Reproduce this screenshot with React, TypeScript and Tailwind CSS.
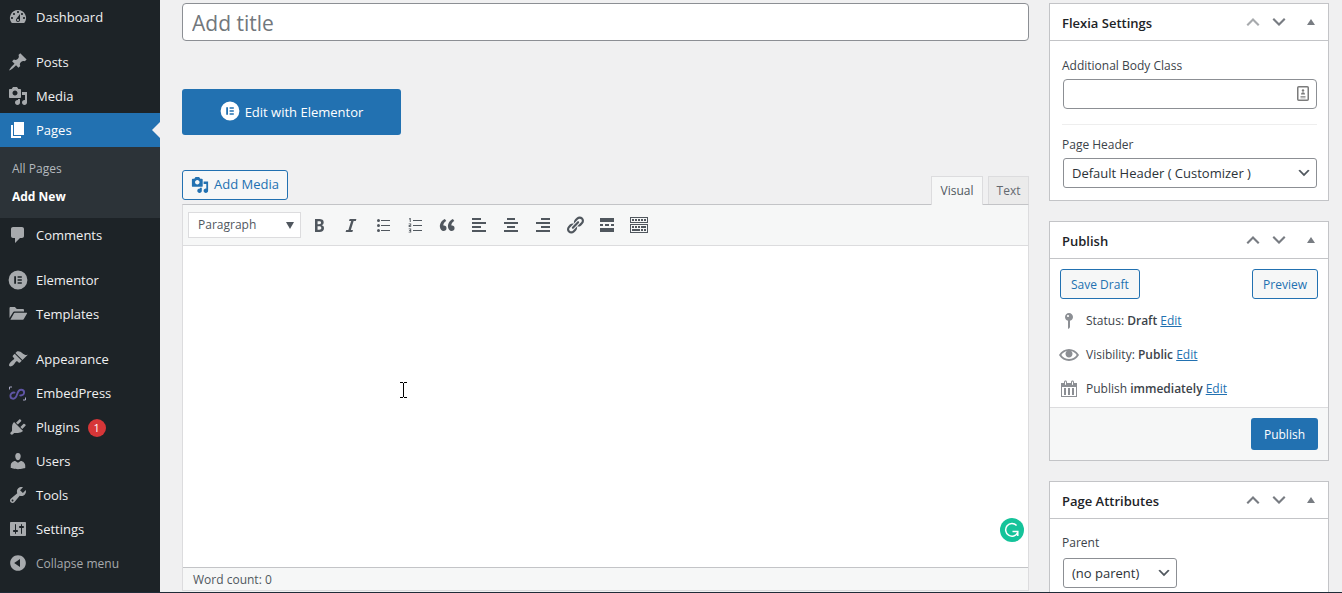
import React from "react";

const paths = {
  dashboard:
    "M3.76 16h12.48A7.998 7.998 0 0 0 10 3a7.998 7.998 0 0 0-6.24 13zM10 4c.55 0 1 .45 1 1s-.45 1-1 1-1-.45-1-1 .45-1 1-1zM6 6c.55 0 1 .45 1 1s-.45 1-1 1-1-.45-1-1 .45-1 1-1zm8 0c.55 0 1 .45 1 1s-.45 1-1 1-1-.45-1-1 .45-1 1-1zm-5.37 5.55L12 7v6c0 1.1-.9 2-2 2s-2-.9-2-2c0-.57.24-1.08.63-1.45zM4 10c.55 0 1 .45 1 1s-.45 1-1 1-1-.45-1-1 .45-1 1-1zm12 0c.55 0 1 .45 1 1s-.45 1-1 1-1-.45-1-1 .45-1 1-1zm-5 3c0-.55-.45-1-1-1s-1 .45-1 1 .45 1 1 1 1-.45 1-1z",
  post: "M10.44 3.02l1.82-1.82 6.36 6.35-1.83 1.82c-1.05-.68-2.48-.57-3.41.36l-.75.75c-.92.93-1.04 2.35-.35 3.41l-1.83 1.82-2.41-2.41-2.8 2.79c-.42.42-3.38 2.71-3.8 2.29s1.86-3.39 2.28-3.81l2.79-2.79L4.1 9.36l1.83-1.82c1.05.69 2.48.57 3.4-.36l.75-.75c.93-.92 1.05-2.35.36-3.41z",
  media:
    "M13 11V4c0-.55-.45-1-1-1h-1.67L9 1H5L3.67 3H2c-.55 0-1 .45-1 1v7c0 .55.45 1 1 1h10c.55 0 1-.45 1-1zM7 4.5c1.38 0 2.5 1.12 2.5 2.5S8.38 9.5 7 9.5 4.5 8.38 4.5 7 5.62 4.5 7 4.5zM14 6h5v10.5c0 1.38-1.12 2.5-2.5 2.5S14 17.88 14 16.5s1.12-2.5 2.5-2.5c.17 0 .34.02.5.05V9h-3V6zm-4 8.05V13h2v3.5c0 1.38-1.12 2.5-2.5 2.5S7 17.88 7 16.5 8.12 14 9.5 14c.17 0 .34.02.5.05z",
  page: "M6 15V2h10v13H6zm-1 1h8v2H3V5h2v11z",
  comments:
    "M5 2h9c1.1 0 2 .9 2 2v7c0 1.1-.9 2-2 2h-2l-5 5v-5H5c-1.1 0-2-.9-2-2V4c0-1.1.9-2 2-2z",
  elementor:
    "M10 .6a9.4 9.4 0 1 0 0 18.800A9.4 9.4 0 0 0 10 .6zM6.2 6.2H8v7.6H6.2zM9.6 6.2h4.2v1.5H9.6zM9.6 9.2h4.2v1.5H9.6zM9.6 12.3h4.2v1.5H9.6z",
  templates:
    "M1.5 14V4.2c0-.7.5-1.2 1.2-1.2h4.2l1.9 2h6c.7 0 1.2.5 1.2 1.2v1.3H6.3c-.5 0-1 .3-1.200.7zM2.400 15.700L6 9.300c.2-.4.5-.6.9-.6h11.600c.500 0 .8.5.5.9l-3.200 5.500c-.2.4-.5.600-.9.600z",
  appearance:
    "M14.48 11.06L7.41 3.99l1.5-1.5c.5-.56 2.3-.47 3.51.32 1.21.8 1.43 1.28 2.91 2.1 1.18.64 2.45 1.26 4.45.85zm-.71.71L6.7 4.7 4.93 6.47c-.39.39-.39 1.02 0 1.41l1.06 1.06c.39.39.39 1.03 0 1.42-.6.6-1.43 1.11-2.21 1.69-.35.26-.7.53-1.01.84C1.43 14.23.4 16.08 1.4 17.07c.99 1 2.84-.03 4.18-1.36.31-.31.58-.66.85-1.02.57-.78 1.08-1.61 1.69-2.21.39-.39 1.02-.39 1.41 0l1.06 1.06c.39.39 1.02.39 1.41 0z",
  plugins:
    "M13.11 4.36L9.87 7.6 8 5.73l3.24-3.24c.35-.34 1.05-.2 1.56.32.52.51.66 1.21.31 1.55zm-8 1.77l.91-1.12 9.01 9.01-1.19.84c-.71.71-2.63 1.16-3.82 1.16H6.14L4.9 17.26c-.59.59-1.54.59-2.12 0-.59-.58-.59-1.53 0-2.12l1.24-1.24v-3.88c0-1.13.4-3.19 1.09-3.89zm7.26 3.97l3.24-3.24c.34-.35 1.04-.21 1.55.31.52.51.66 1.21.31 1.55l-3.24 3.25z",
  users:
    "M10 9.25c-2.27 0-2.73-3.44-2.73-3.44C7 4.02 7.82 2 9.97 2c2.16 0 2.98 2.02 2.71 3.81 0 0-.41 3.44-2.68 3.44zm0 2.57L12.72 10c2.39 0 4.52 2.33 4.52 4.53v2.49s-3.65 1.13-7.24 1.13c-3.65 0-7.24-1.13-7.24-1.13v-2.49c0-2.25 1.94-4.48 4.47-4.48z",
  tools:
    "M16.68 9.77c-1.34 1.34-3.3 1.67-4.95.99l-5.41 6.52c-.99.99-2.59.99-3.58 0s-.99-2.59 0-3.57l6.52-5.42c-.68-1.65-.35-3.61.99-4.95 1.28-1.28 3.12-1.62 4.72-1.06l-2.89 2.89 2.82 2.82 2.86-2.87c.53 1.58.18 3.39-1.08 4.65zM3.81 16.21c.4.39 1.04.39 1.43 0 .4-.4.4-1.04 0-1.43-.39-.4-1.03-.4-1.43 0-.39.39-.39 1.03 0 1.43z",
  settings:
    "M18 16V4c0-.55-.45-1-1-1H3c-.55 0-1 .45-1 1v12c0 .55.45 1 1 1h14c.55 0 1-.45 1-1zM8 11h1c.55 0 1 .45 1 1s-.45 1-1 1H8v1.5c0 .28-.22.5-.5.5s-.5-.22-.5-.5V13H6c-.55 0-1-.45-1-1s.45-1 1-1h1V5.5c0-.28.22-.5.5-.5s.5.22.5.5V11zm5-2h-1c-.55 0-1-.45-1-1s.45-1 1-1h1V5.5c0-.28.22-.5.5-.5s.5.22.5.5V7h1c.55 0 1 .45 1 1s-.45 1-1 1h-1v5.5c0 .28-.22.5-.5.5s-.5-.22-.5-.5V9z",
  collapse:
    "M10 2.16c4.33 0 7.84 3.51 7.84 7.84s-3.51 7.84-7.84 7.84S2.16 14.33 2.16 10 5.71 2.16 10 2.16zm2 11.72V6.12L6.18 9.97z",
  bold: "M6 4v13h4.54c1.37 0 2.46-.33 3.26-1 .8-.66 1.2-1.58 1.2-2.77 0-.84-.17-1.51-.51-2.01s-.9-.85-1.67-1.03v-.09c.57-.1 1.02-.4 1.36-.9s.51-1.13.51-1.91c0-1.14-.39-1.98-1.17-2.5C12.75 4.26 11.5 4 9.78 4H6zm2.57 5.15V6.26h1.36c.73 0 1.27.11 1.61.32.34.22.51.58.51 1.07 0 .54-.16.92-.47 1.15s-.82.35-1.51.35h-1.5zm0 2.19h1.6c1.44 0 2.16.53 2.16 1.61 0 .6-.17 1.05-.51 1.34s-.86.43-1.57.43H8.57v-3.38z",
  italic: "M14.78 6h-2.13l-2.8 9h2.12l-.62 2H4.6l.62-2h2.14l2.8-9H8.03l.62-2h6.75z",
  bullets:
    "M5.500 7a1.500 1.500 0 1 1 0-3 1.500 1.500 0 0 1 0 3zM8 5h9v1H8zM5.500 12a1.500 1.500 0 1 1 0-3 1.500 1.500 0 0 1 0 3zM8 10h9v1H8zM5.500 17a1.500 1.500 0 1 1 0-3 1.500 1.500 0 0 1 0 3zM8 15h9v1H8z",
  numbers:
    "M8 5h9v1H8zM8 10h9v1H8zM8 15h9v1H8zM4.800 3h.9v4h-.9V4.200l-.8.4v-.9zM3.700 8.500h2.500v2.200H4.600v.6h1.600v.8H3.700v-2.200h1.600v-.6H3.700zM3.700 13.500h2.500v4H3.700v-.8h1.600v-.8H4.200v-.8h1.100v-.8H3.700z",
  quote:
    "M9.49 13.22c0-.74-.2-1.38-.61-1.9-.62-.78-1.83-.88-2.53-.72-.29-1.65 1.11-3.75 2.92-4.65L7.88 4c-2.73 1.3-5.42 4.28-4.96 8.05C3.21 14.43 4.59 16 6.54 16c.85 0 1.56-.25 2.12-.75s.83-1.18.83-2.03zm8.05 0c0-.74-.2-1.38-.61-1.9-.63-.78-1.83-.88-2.53-.72-.29-1.65 1.11-3.75 2.92-4.65L15.93 4c-2.73 1.3-5.41 4.28-4.95 8.05.29 2.38 1.66 3.95 3.61 3.95.85 0 1.56-.25 2.12-.75s.83-1.18.83-2.03z",
  left: "M12 5V3H3v2h9zm5 4V7H3v2h14zm-5 4v-2H3v2h9zm5 4v-2H3v2h14z",
  center: "M14 5V3H6v2h8zm3 4V7H3v2h14zm-3 4v-2H6v2h8zm3 4v-2H3v2h14z",
  right: "M17 5V3H8v2h9zm0 4V7H3v2h14zm0 4v-2H8v2h9zm0 4v-2H3v2h14z",
  link: "M17.74 2.76c1.68 1.69 1.68 4.41 0 6.1l-1.53 1.52c-1.12 1.12-2.7 1.47-4.14 1.09l2.62-2.61.76-.77.76-.76c.84-.84.84-2.2 0-3.04-.84-.85-2.2-.85-3.04 0l-.77.76-3.38 3.38c-.37-1.44-.02-3.02 1.1-4.14l1.52-1.53c1.69-1.68 4.42-1.68 6.1 0zM8.59 13.43l5.34-5.34c.42-.42.42-1.1 0-1.52-.44-.43-1.13-.39-1.53 0l-5.33 5.34c-.42.42-.42 1.1 0 1.52.44.43 1.13.39 1.52 0zm-.76 2.29l4.14-4.15c.38 1.44.03 3.02-1.09 4.14l-1.52 1.53c-1.69 1.68-4.41 1.68-6.1 0-1.68-1.68-1.68-4.42 0-6.1l1.53-1.52c1.12-1.12 2.7-1.47 4.14-1.1l-4.14 4.15c-.85.84-.85 2.2 0 3.05.84.84 2.2.84 3.04 0z",
  more: "M17 7V3H3v4h14zM6 11V9H3v2h3zm6 0V9H8v2h4zm5 0V9h-3v2h3zm0 6v-4H3v4h14z",
  toggle:
    "M19 2v6H1V2h18zm-1 5V3H2v4h16zM5 4v2H3V4h2zm3 0v2H6V4h2zm3 0v2H9V4h2zm3 0v2h-2V4h2zm3 0v2h-2V4h2zm2 5v9H1V9h18zm-1 8v-7H2v7h16zM5 11v2H3v-2h2zm3 0v2H6v-2h2zm3 0v2H9v-2h2zm6 0v2h-5v-2h5zm-6 3v2H3v-2h8zm3 0v2h-2v-2h2zm3 0v2h-2v-2h2z",
  status:
    "M14 6c0 1.86-1.28 3.41-3 3.86V16c0 1-2 2-2 2V9.86c-1.72-.45-3-2-3-3.86 0-2.21 1.79-4 4-4s4 1.79 4 4zM8 5c0 .55.45 1 1 1s1-.45 1-1-.45-1-1-1-1 .45-1 1z",
  visibility:
    "M19.7 9.4C17.7 6 14 3.9 10 3.9S2.3 6 .3 9.4L0 10l.3.6c2 3.4 5.7 5.5 9.7 5.5s7.7-2.1 9.7-5.5l.3-.6-.3-.6zM10 14.1c-3.1 0-6-1.6-7.7-4.1C3.6 8 5.7 6.6 8 6.1c-.9.6-1.5 1.7-1.5 2.9 0 1.9 1.6 3.5 3.5 3.5s3.5-1.6 3.5-3.5c0-1.2-.6-2.3-1.5-2.9 2.3.5 4.4 1.9 5.7 3.9-1.7 2.5-4.6 4.1-7.7 4.1z",
  calendar:
    "M15 4h3v14H2V4h3V3c0-.83.67-1.5 1.5-1.5S8 2.17 8 3v1h4V3c0-.83.67-1.5 1.5-1.5S15 2.17 15 3v1zM6 3v2.5c0 .28.22.5.5.5s.5-.22.5-.5V3c0-.28-.22-.5-.5-.5S6 2.72 6 3zm7 0v2.5c0 .28.22.5.5.5s.5-.22.5-.5V3c0-.28-.22-.5-.5-.5s-.5.22-.5.5zm4 14V8H3v9h14zM7 16V9H5v7h2zm4 0V9H9v7h2zm4 0V9h-2v7h2z",
  up: "M3.500 12.400l1.500 1.600 5-4.900 5 4.900 1.500-1.600L10 6z",
  down: "M3.500 7.600L5 6l5 4.900L15 6l1.500 1.600L10 14z",
  triangleUp: "M6 13l4-6 4 6z",
  selectArrow: "M5 6l5 5 5-5 2 1-7 7-7-7 2-1z",
};

type IconName = keyof typeof paths;

function Icon({ name, className = "size-5" }: { name: IconName; className?: string }) {
  return (
    <svg viewBox="0 0 20 20" fill="currentColor" fillRule="evenodd" aria-hidden="true" className={className}>
      <path d={paths[name]} />
    </svg>
  );
}

function EmbedPressIcon() {
  return (
    <svg viewBox="0 0 20 20" fill="none" aria-hidden="true" className="size-5">
      <path
        d="M6.500 9.600C4.500 9.200 2.400 10.700 2.400 12.800c0 1.700 1.300 2.900 2.800 2.900 2.300 0 3.200-2 3.900-4.400.7-2.500 1.700-4.600 4.100-4.600 1.600 0 2.900 1.200 2.900 2.800 0 2-1.900 3.300-3.900 2.900"
        stroke="#5f55a5"
        strokeWidth="1.900"
        strokeLinecap="round"
      />
      <path d="M1.500 6.500V4H4M17.500 14.500V17H15" stroke="#a9a8c4" strokeWidth="1" />
    </svg>
  );
}

type Item = { label: string; icon?: IconName; badge?: string; active?: boolean; gap?: boolean };

const menu: Item[] = [
  { label: "Dashboard", icon: "dashboard" },
  { label: "Posts", icon: "post", gap: true },
  { label: "Media", icon: "media" },
  { label: "Pages", icon: "page", active: true },
  { label: "Comments", icon: "comments" },
  { label: "Elementor", icon: "elementor", gap: true },
  { label: "Templates", icon: "templates" },
  { label: "Appearance", icon: "appearance", gap: true },
  { label: "EmbedPress" },
  { label: "Plugins", icon: "plugins", badge: "1" },
  { label: "Users", icon: "users" },
  { label: "Tools", icon: "tools" },
  { label: "Settings", icon: "settings" },
];

function Sidebar() {
  return (
    <nav aria-label="Main menu" className="w-40 shrink-0 bg-[#1d2327] text-[13px] text-[#f0f0f1]">
      <ul>
        {menu.map((m) => (
          <li key={m.label} className={m.gap ? "pt-[11px]" : ""}>
            <a
              href="#"
              className={
                m.active
                  ? "relative flex h-[34px] items-center gap-2 bg-[#2271b1] pl-2 font-medium text-white"
                  : "flex h-[34px] items-center gap-2 pl-2 font-medium"
              }
            >
              <span className={m.active ? "text-white" : "text-[#a7aaad]"}>
                {m.icon ? <Icon name={m.icon} /> : <EmbedPressIcon />}
              </span>
              <span className="pt-[2px]">{m.label}</span>
              {m.badge && (
                <span className="mt-[2px] flex size-[18px] items-center justify-center rounded-full bg-[#d63638] text-[11px] text-white">
                  {m.badge}
                </span>
              )}
              {m.active && (
                <span className="absolute top-1/2 right-0 -translate-y-1/2 border-8 border-transparent border-r-[#f0f0f1]" />
              )}
            </a>
            {m.active && (
              <ul className="bg-[#2c3338] pt-2 pb-[7px] pl-3">
                <li>
                  <a href="#" className="flex h-7 items-center text-xs text-[#b4b9be]">
                    All Pages
                  </a>
                </li>
                <li>
                  <a href="#" className="flex h-7 items-center text-xs font-bold text-white">
                    Add New
                  </a>
                </li>
              </ul>
            )}
          </li>
        ))}
      </ul>
      <button type="button" className="flex h-[34px] w-full items-center gap-2 pl-2 text-xs text-[#a7aaad]">
        <Icon name="collapse" />
        <span className="pt-[2px]">Collapse menu</span>
      </button>
    </nav>
  );
}

const tools: { name: IconName; label: string }[] = [
  { name: "bold", label: "Bold" },
  { name: "italic", label: "Italic" },
  { name: "bullets", label: "Bulleted list" },
  { name: "numbers", label: "Numbered list" },
  { name: "quote", label: "Blockquote" },
  { name: "left", label: "Align left" },
  { name: "center", label: "Align center" },
  { name: "right", label: "Align right" },
  { name: "link", label: "Insert link" },
  { name: "more", label: "Insert Read More tag" },
  { name: "toggle", label: "Toolbar toggle" },
];

function Editor() {
  return (
    <section className="flex grow flex-col pt-[35px]">
      <div className="flex items-end justify-between">
        <button
          type="button"
          className="mb-1 flex h-[30px] items-center gap-[5px] rounded-[3px] border border-[#2271b1] bg-[#f6f7f7] px-2 text-[13px] text-[#2271b1]"
        >
          <Icon name="media" className="size-[18px]" />
          Add Media
        </button>
        <div className="flex items-end gap-[5px] text-xs text-[#50575e]">
          <button
            type="button"
            className="relative z-10 -mb-px h-[29px] w-[52px] border border-b-0 border-[#dcdcde] bg-[#f6f7f7]"
          >
            Visual
          </button>
          <button type="button" className="h-7 w-[41px] border border-b-0 border-[#dcdcde] bg-[#ebebeb] text-[#646970]">
            Text
          </button>
        </div>
      </div>
      <div className="flex grow flex-col border border-[#dcdcde] border-t-[#c3c4c7] bg-white">
        <div className="flex h-[41px] items-center border-b border-[#dcdcde] bg-[#f6f7f7] pl-[5px] text-[#50575e]">
          <div className="relative mr-1">
            <select
              aria-label="Text format"
              className="block h-[26px] w-[113px] appearance-none border border-[#dcdcde] bg-white pl-[9px] text-xs text-[#50575e]"
            >
              <option>Paragraph</option>
              <option>Heading 1</option>
              <option>Heading 2</option>
            </select>
            <svg viewBox="0 0 10 8" aria-hidden="true" className="pointer-events-none absolute top-[9px] right-[6px] h-2 w-[10px]">
              <path d="M1 1h8L5 8z" fill="#50575e" />
            </svg>
          </div>
          <div className="flex gap-1">
            {tools.map((t) => (
              <button key={t.name} type="button" aria-label={t.label} className="flex h-7 w-7 items-center justify-center">
                <Icon name={t.name} />
              </button>
            ))}
          </div>
        </div>
        <div className="relative flex grow">
          <textarea aria-label="Page content" className="block w-full grow resize-none outline-none" />
          <svg viewBox="0 0 9 16" aria-hidden="true" className="absolute top-[136px] left-[216px] h-4 w-[9px]">
            <path d="M1 .500h3M5 .500h3M1 15.500h3M5 15.500h3M4.500 1v14" stroke="#000" fill="none" />
          </svg>
          <button type="button" aria-label="Check writing" className="absolute right-1 bottom-[25px] size-6">
            <svg viewBox="0 0 24 24" className="size-6" aria-hidden="true">
              <circle cx="12" cy="12" r="12" fill="#15c39a" />
              <path
                d="M16.600 7.600A6.300 6.300 0 1 0 17.700 14.500M12.500 13.600h5.300v4.400"
                fill="none"
                stroke="#fff"
                strokeWidth="1.500"
              />
            </svg>
          </button>
        </div>
        <div className="flex h-[23px] items-center border-t border-[#c3c4c7] bg-[#f6f7f7] pl-[10px] text-xs text-[#50575e]">
          <span className="pt-px">Word count: 0</span>
        </div>
      </div>
    </section>
  );
}

function Panel({ title, first, children }: { title: string; first?: boolean; children: React.ReactNode }) {
  return (
    <section className="border border-[#c3c4c7] bg-white">
      <header className="flex h-[37px] items-center justify-between border-b border-[#c3c4c7] pr-[7px] pl-3">
        <h2 className="pt-[3px] text-[13px] font-semibold text-[#1d2327]">{title}</h2>
        <div className="flex items-center text-[#787c82]">
          <button type="button" aria-label="Move up" disabled={first} className="mr-[6px] disabled:text-[#a7aaad]">
            <Icon name="up" />
          </button>
          <button type="button" aria-label="Move down" className="mr-3">
            <Icon name="down" />
          </button>
          <button type="button" aria-label="Toggle panel">
            <Icon name="triangleUp" />
          </button>
        </div>
      </header>
      {children}
    </section>
  );
}

function Select({ id, value, className }: { id: string; value: string; className: string }) {
  return (
    <div className={className}>
      <select
        id={id}
        className="block h-[30px] w-full appearance-none rounded-[3px] border border-[#8c8f94] bg-white pt-[2px] pl-2 text-[13px] text-[#2c3338]"
      >
        <option>{value}</option>
      </select>
      <Icon name="selectArrow" className="pointer-events-none absolute top-[7px] right-[5px] size-4 text-[#50575e]" />
    </div>
  );
}

const outline = "h-[30px] rounded-[3px] border border-[#2271b1] bg-[#f6f7f7] px-[10px] pt-px text-xs text-[#2271b1]";

const details: { icon: IconName; label: string; value: string }[] = [
  { icon: "status", label: "Status:", value: "Draft" },
  { icon: "visibility", label: "Visibility:", value: "Public" },
  { icon: "calendar", label: "Publish", value: "immediately" },
];

export default function App() {
  return (
    <div className="flex h-screen overflow-hidden border-b border-[#1f2b38] bg-[#f0f0f1] font-['Segoe_UI','Open_Sans',sans-serif] text-[#3c434a]">
      <Sidebar />
      <main className="flex min-w-0 grow gap-5 pt-[3px] pr-[13px] pl-[22px]">
        <div className="flex min-w-0 grow flex-col pb-px">
          <input
            type="text"
            aria-label="Title"
            placeholder="Add title"
            className="h-[38px] w-full rounded-[4px] border border-[#8c8f94] bg-white px-[9px] pt-[2px] text-[21px] outline-none placeholder:text-[#72777c]"
          />
          <button
            type="button"
            className="mt-12 flex h-[46px] w-[219px] items-center justify-center gap-[5px] rounded-[3px] bg-[#2271b1] text-[13px] font-medium text-white"
          >
            <Icon name="elementor" className="mb-[2px] size-5" />
            <span className="pt-[2px]">Edit with Elementor</span>
          </button>
          <Editor />
        </div>

        <aside className="flex w-[280px] shrink-0 flex-col gap-5 text-xs">
          <Panel title="Flexia Settings" first>
            <div className="pt-[17px] pr-[11px] pb-3 pl-3">
              <label htmlFor="body-class" className="block h-[21px] leading-4">
                Additional Body Class
              </label>
              <div className="relative ml-px">
                <input
                  id="body-class"
                  type="text"
                  className="block h-[30px] w-full rounded-[4px] border border-[#8c8f94] bg-white px-2 pr-8 outline-none"
                />
                <svg viewBox="0 0 12 15" aria-hidden="true" className="absolute top-[7px] right-2 h-[15px] w-3">
                  <rect x=".75" y=".75" width="10.500" height="13.500" rx="1" fill="#fff" stroke="#7b7b7b" strokeWidth="1.500" />
                  <circle cx="6" cy="4.500" r="1.200" fill="#7b7b7b" />
                  <path d="M4 8.500c0-3 4-3 4 0zM3.500 10h5v.8h-5zM3.500 11.500h5v.8h-5z" fill="#7b7b7b" />
                </svg>
              </div>
              <hr className="mt-[15px] mb-3 border-[#eeeeee]" />
              <label htmlFor="page-header" className="block h-[21px] leading-4">
                Page Header
              </label>
              <Select id="page-header" value="Default Header ( Customizer )" className="relative ml-px" />
            </div>
          </Panel>

          <Panel title="Publish">
            <div className="flex justify-between px-[10px] pt-[10px] pb-[5px]">
              <button type="button" className={outline}>
                Save Draft
              </button>
              <button type="button" className={outline}>
                Preview
              </button>
            </div>
            <ul className="pb-px pl-[9px]">
              {details.map((d) => (
                <li key={d.label} className="flex h-[34px] items-center gap-[7px]">
                  <Icon name={d.icon} className="size-5 text-[#8c8f94]" />
                  <span>
                    {d.label} <b className="font-semibold">{d.value}</b>{" "}
                    <a href="#" className="text-[#2271b1] underline">
                      Edit
                    </a>
                  </span>
                </li>
              ))}
            </ul>
            <div className="flex justify-end border-t border-[#dcdcde] bg-[#f6f7f7] p-[10px]">
              <button type="button" className="h-8 rounded-[3px] bg-[#2271b1] px-[13px] pt-px text-xs font-medium text-white">
                Publish
              </button>
            </div>
          </Panel>

          <Panel title="Page Attributes">
            <div className="px-3 pt-4 pb-3">
              <label htmlFor="parent" className="block h-[23px] leading-4 font-medium">
                Parent
              </label>
              <Select id="parent" value="(no parent)" className="relative ml-px w-[114px]" />
            </div>
          </Panel>
        </aside>
      </main>
    </div>
  );
}
